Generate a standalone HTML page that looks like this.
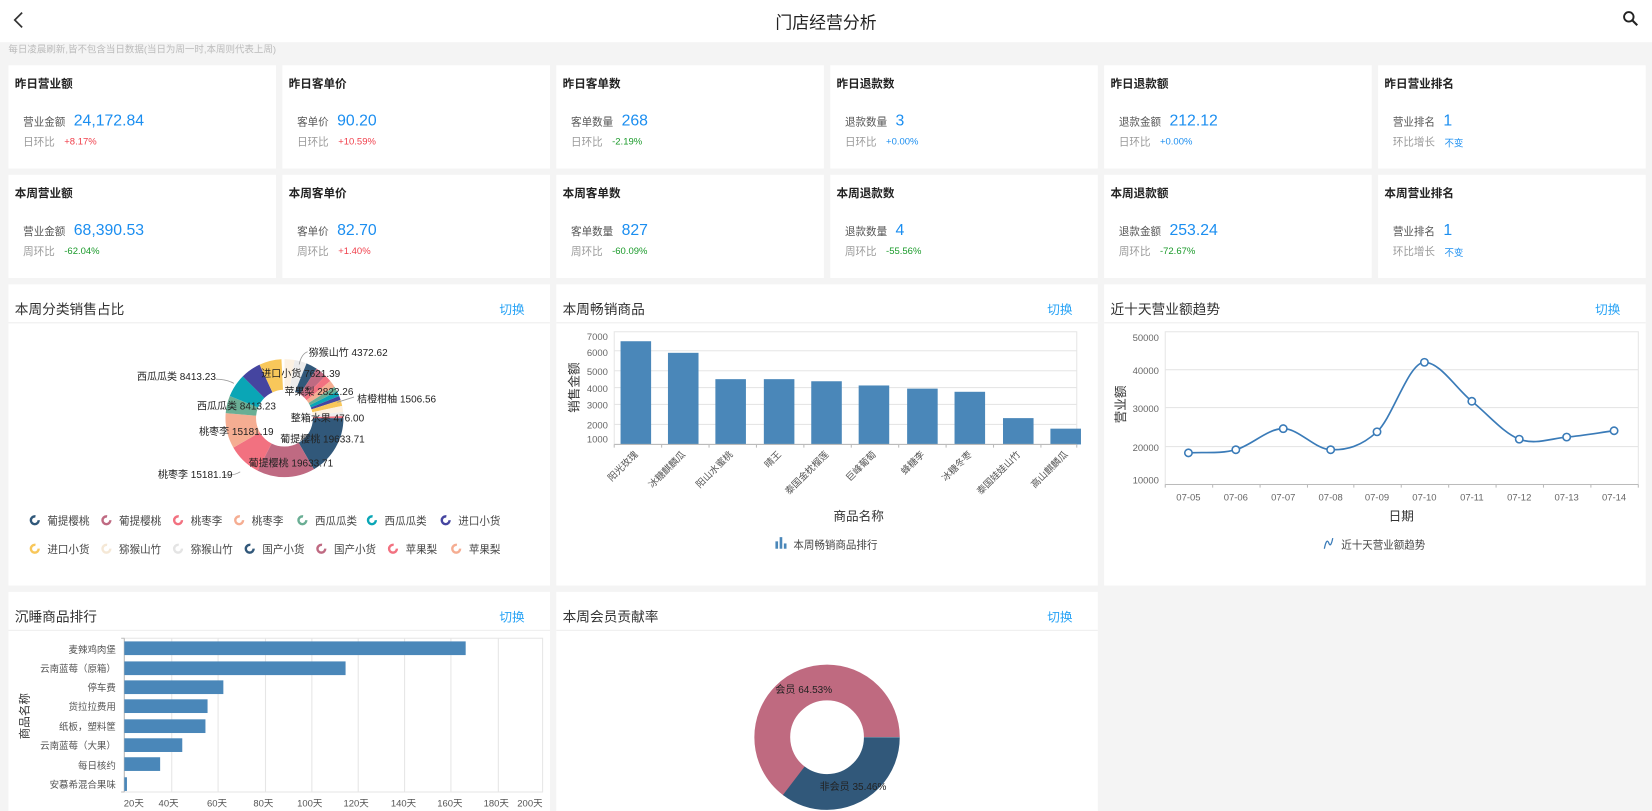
<!DOCTYPE html>
<html><head><meta charset="utf-8"><style>
*{margin:0;padding:0;box-sizing:border-box}
html,body{width:1652px;height:811px;overflow:hidden;background:#f4f4f4}
body{font-family:"Liberation Sans","Noto Sans CJK SC",sans-serif;color:#333}
#w{position:absolute;left:0;top:0;width:1568px;height:770px;transform:scale(1.05357,1.0532);transform-origin:0 0;background:#f4f4f4}
.a{position:absolute}
.hdr{left:0;top:0;width:1568px;height:40px;background:#fff}
.note{left:8px;top:41px;font-size:9px;color:#bbb;line-height:12px}
.card{position:absolute;background:#fff;width:254px;height:98px}
.card .t{position:absolute;left:6px;top:9px;font-size:11px;font-weight:bold;color:#222}
.card .r1{position:absolute;left:14px;top:44px;display:flex;align-items:baseline;white-space:nowrap}
.card .r1 span{font-size:10px;color:#555;margin-right:8px}
.card .r1 b{font-weight:normal;font-size:15px;color:#1b8ef0}
.card .r2{position:absolute;left:14px;top:64px;font-size:10px;color:#999;white-space:nowrap}
.card .r2 i{font-style:normal;position:absolute;left:39px;top:3px;font-size:9px}
.red{color:#f0404c}.grn{color:#1a9a2a}.blu{color:#1b8ef0}
.pan{position:absolute;background:#fff}
.pan .pt{position:absolute;left:6px;top:13px;font-size:13px;color:#333}
.pan .sw{position:absolute;right:24px;top:15px;font-size:12px;color:#29a3f5}
.pan .ln{position:absolute;left:0;right:0;top:36px;height:1px;background:#eee}
svg text{font-family:"Liberation Sans","Noto Sans CJK SC",sans-serif}
</style></head><body><div id="w">
<div class="a hdr"></div>
<svg class="a" style="left:0;top:0" width="1568" height="40"><path d="M21 12 L14 19 L21 26" fill="none" stroke="#333" stroke-width="1.6"/><circle cx="1546" cy="16" r="4.5" fill="none" stroke="#222" stroke-width="1.8"/><path d="M1549.5 19.5 L1554 24" stroke="#222" stroke-width="2"/></svg>
<div class="a" style="left:0;width:1568px;top:8px;text-align:center;font-size:16px;color:#222">门店经营分析</div>
<div class="a note">每日凌晨刷新,皆不包含当日数据(当日为周一时,本周则代表上周)</div>

<div class="card" style="left:8px;top:62px"><div class="t">昨日营业额</div><div class="r1"><span>营业金额</span><b>24,172.84</b></div><div class="r2">日环比<i class="red">+8.17%</i></div></div>
<div class="card" style="left:268px;top:62px"><div class="t">昨日客单价</div><div class="r1"><span>客单价</span><b>90.20</b></div><div class="r2">日环比<i class="red">+10.59%</i></div></div>
<div class="card" style="left:528px;top:62px"><div class="t">昨日客单数</div><div class="r1"><span>客单数量</span><b>268</b></div><div class="r2">日环比<i class="grn">-2.19%</i></div></div>
<div class="card" style="left:788px;top:62px"><div class="t">昨日退款数</div><div class="r1"><span>退款数量</span><b>3</b></div><div class="r2">日环比<i class="blu">+0.00%</i></div></div>
<div class="card" style="left:1048px;top:62px"><div class="t">昨日退款额</div><div class="r1"><span>退款金额</span><b>212.12</b></div><div class="r2">日环比<i class="blu">+0.00%</i></div></div>
<div class="card" style="left:1308px;top:62px"><div class="t">昨日营业排名</div><div class="r1"><span>营业排名</span><b>1</b></div><div class="r2">环比增长<i class="blu" style="left:49px">不变</i></div></div>

<div class="card" style="left:8px;top:166px"><div class="t">本周营业额</div><div class="r1"><span>营业金额</span><b>68,390.53</b></div><div class="r2">周环比<i class="grn">-62.04%</i></div></div>
<div class="card" style="left:268px;top:166px"><div class="t">本周客单价</div><div class="r1"><span>客单价</span><b>82.70</b></div><div class="r2">周环比<i class="red">+1.40%</i></div></div>
<div class="card" style="left:528px;top:166px"><div class="t">本周客单数</div><div class="r1"><span>客单数量</span><b>827</b></div><div class="r2">周环比<i class="grn">-60.09%</i></div></div>
<div class="card" style="left:788px;top:166px"><div class="t">本周退款数</div><div class="r1"><span>退款数量</span><b>4</b></div><div class="r2">周环比<i class="grn">-55.56%</i></div></div>
<div class="card" style="left:1048px;top:166px"><div class="t">本周退款额</div><div class="r1"><span>退款金额</span><b>253.24</b></div><div class="r2">周环比<i class="grn">-72.67%</i></div></div>
<div class="card" style="left:1308px;top:166px"><div class="t">本周营业排名</div><div class="r1"><span>营业排名</span><b>1</b></div><div class="r2">环比增长<i class="blu" style="left:49px">不变</i></div></div>

<div class="pan" style="left:8px;top:270px;width:514px;height:286px"><div class="pt">本周分类销售占比</div><div class="sw">切换</div><div class="ln"></div></div>
<div class="pan" style="left:528px;top:270px;width:514px;height:286px"><div class="pt">本周畅销商品</div><div class="sw">切换</div><div class="ln"></div></div>
<div class="pan" style="left:1048px;top:270px;width:514px;height:286px"><div class="pt">近十天营业额趋势</div><div class="sw">切换</div><div class="ln"></div></div>
<div class="pan" style="left:8px;top:562px;width:514px;height:208px"><div class="pt">沉睡商品排行</div><div class="sw">切换</div><div class="ln"></div></div>
<div class="pan" style="left:528px;top:562px;width:514px;height:208px"><div class="pt">本周会员贡献率</div><div class="sw">切换</div><div class="ln"></div></div>

<svg class="a" style="left:0;top:0" width="1568" height="770">
<g transform="translate(270,397) rotate(-90)" fill="none" stroke-width="29">
<circle r="41.5" pathLength="360" stroke="#31587a" stroke-dasharray="60 400" stroke-dashoffset="-90"/>
<circle r="41.5" pathLength="360" stroke="#bf6a82" stroke-dasharray="57 400" stroke-dashoffset="-150"/>
<circle r="41.5" pathLength="360" stroke="#f27180" stroke-dasharray="33 400" stroke-dashoffset="-207"/>
<circle r="41.5" pathLength="360" stroke="#f5ad92" stroke-dasharray="35 400" stroke-dashoffset="-240"/>
<circle r="41.5" pathLength="360" stroke="#6aae94" stroke-dasharray="17 400" stroke-dashoffset="-275"/>
<circle r="41.5" pathLength="360" stroke="#0aa6b6" stroke-dasharray="23 400" stroke-dashoffset="-292"/>
<circle r="41.5" pathLength="360" stroke="#4545a0" stroke-dasharray="20 400" stroke-dashoffset="-315"/>
<circle r="41.5" pathLength="360" stroke="#f8c75a" stroke-dasharray="22 400" stroke-dashoffset="-335"/>
<circle r="41.5" pathLength="360" stroke="#fcf1e2" stroke-dasharray="13 400" stroke-dashoffset="3"/>
<circle r="41.5" pathLength="360" stroke="#ececec" stroke-dasharray="12 400" stroke-dashoffset="-10"/>
<circle r="41.5" pathLength="360" stroke="#31587a" stroke-dasharray="11 400" stroke-dashoffset="-22"/>
<circle r="41.5" pathLength="360" stroke="#bf6a82" stroke-dasharray="11 400" stroke-dashoffset="-33"/>
<circle r="41.5" pathLength="360" stroke="#f27180" stroke-dasharray="7 400" stroke-dashoffset="-44"/>
<circle r="41.5" pathLength="360" stroke="#f5ad92" stroke-dasharray="7 400" stroke-dashoffset="-51"/>
<circle r="41.5" pathLength="360" stroke="#6aae94" stroke-dasharray="5 400" stroke-dashoffset="-58"/>
<circle r="41.5" pathLength="360" stroke="#0aa6b6" stroke-dasharray="5 400" stroke-dashoffset="-63"/>
<circle r="41.5" pathLength="360" stroke="#4545a0" stroke-dasharray="4 400" stroke-dashoffset="-68"/>
<circle r="41.5" pathLength="360" stroke="#f8c75a" stroke-dasharray="6 400" stroke-dashoffset="-72"/>
<circle r="41.5" pathLength="360" stroke="#fcf1e2" stroke-dasharray="6 400" stroke-dashoffset="-78"/>
<circle r="41.5" pathLength="360" stroke="#ececec" stroke-dasharray="4 400" stroke-dashoffset="-84"/>
<circle r="41.5" pathLength="360" stroke="#f27180" stroke-dasharray="2 400" stroke-dashoffset="-88"/>
</g>
<g font-size="9.5" fill="#222">
<path d="M284 346 Q286 336 292 334 M205 360 Q215 360 222 364 M320 382 L336 377 M228 448 Q222 452 212 451" stroke="#999" fill="none" stroke-width="0.8"/>
<text x="293" y="338">猕猴山竹 4372.62</text>
<text x="130" y="361">西瓜瓜类 8413.23</text>
<text x="248" y="358">进口小货 7621.39</text>
<text x="270" y="375">苹果梨 2822.26</text>
<text x="339" y="382">桔橙柑柚 1506.56</text>
<text x="187" y="389">西瓜瓜类 8413.23</text>
<text x="276" y="400">整箱水果 476.00</text>
<text x="189" y="413">桃枣李 15181.19</text>
<text x="266" y="420">葡提樱桃 19633.71</text>
<text x="236" y="443">葡提樱桃 19633.71</text>
<text x="150" y="454">桃枣李 15181.19</text>
</g>
<g font-size="10" fill="#444" stroke-width="2.3">
<g fill="none" stroke-dasharray="18 5">
<circle cx="33" cy="494" r="3.7" stroke="#31587a"/><circle cx="101" cy="494" r="3.7" stroke="#bf6a82"/><circle cx="169" cy="494" r="3.7" stroke="#f27180"/><circle cx="227" cy="494" r="3.7" stroke="#f5ad92"/><circle cx="287" cy="494" r="3.7" stroke="#6aae94"/><circle cx="353" cy="494" r="3.7" stroke="#0aa6b6"/><circle cx="423" cy="494" r="3.7" stroke="#4545a0"/>
<circle cx="33" cy="521" r="3.7" stroke="#f8c75a"/><circle cx="101" cy="521" r="3.7" stroke="#f5e8d6"/><circle cx="169" cy="521" r="3.7" stroke="#e4e4e4"/><circle cx="237" cy="521" r="3.7" stroke="#31587a"/><circle cx="305" cy="521" r="3.7" stroke="#bf6a82"/><circle cx="373" cy="521" r="3.7" stroke="#f27180"/><circle cx="433" cy="521" r="3.7" stroke="#f5ad92"/>
</g>
<text x="45" y="498">葡提樱桃</text><text x="113" y="498">葡提樱桃</text><text x="181" y="498">桃枣李</text><text x="239" y="498">桃枣李</text><text x="299" y="498">西瓜瓜类</text><text x="365" y="498">西瓜瓜类</text><text x="435" y="498">进口小货</text>
<text x="45" y="525">进口小货</text><text x="113" y="525">猕猴山竹</text><text x="181" y="525">猕猴山竹</text><text x="249" y="525">国产小货</text><text x="317" y="525">国产小货</text><text x="385" y="525">苹果梨</text><text x="445" y="525">苹果梨</text>
</g>

<g stroke="#e6e6e6" stroke-width="1">
<rect x="583" y="315" width="439" height="107" fill="none"/>
<path d="M583 333H1022M583 352H1022M583 368H1022M583 384H1022M583 403H1022"/>
</g>
<g fill="#4a87b9">
<rect x="589" y="324" width="29" height="98"/><rect x="634" y="335" width="29" height="87"/><rect x="679" y="360" width="29" height="62"/><rect x="725" y="360" width="29" height="62"/><rect x="770" y="362" width="29" height="60"/><rect x="815" y="366" width="29" height="56"/><rect x="861" y="369" width="29" height="53"/><rect x="906" y="372" width="29" height="50"/><rect x="952" y="397" width="29" height="25"/><rect x="997" y="407" width="29" height="15"/>
</g>
<path d="M583 422H1022M583 422v3M628 422v3M673 422v3M718 422v3M763 422v3M808 422v3M853 422v3M898 422v3M943 422v3M988 422v3M1022 422v3" stroke="#bbb"/>
<g font-size="9" fill="#666" text-anchor="end">
<text x="577" y="323">7000</text><text x="577" y="338">6000</text><text x="577" y="356">5000</text><text x="577" y="372">4000</text><text x="577" y="388">3000</text><text x="577" y="407">2000</text><text x="577" y="420">1000</text>
</g>
<g font-size="9" fill="#555" text-anchor="end">
<text transform="translate(606,432) rotate(-45)">阳光玫瑰</text>
<text transform="translate(651,432) rotate(-45)">冰糖麒麟瓜</text>
<text transform="translate(696,432) rotate(-45)">阳山水蜜桃</text>
<text transform="translate(742,432) rotate(-45)">晴王</text>
<text transform="translate(787,432) rotate(-45)">泰国金枕榴莲</text>
<text transform="translate(832,432) rotate(-45)">巨峰葡萄</text>
<text transform="translate(878,432) rotate(-45)">蜂糖李</text>
<text transform="translate(923,432) rotate(-45)">冰糖冬枣</text>
<text transform="translate(969,432) rotate(-45)">泰国娃娃山竹</text>
<text transform="translate(1014,432) rotate(-45)">高山麒麟瓜</text>
</g>
<text transform="translate(549,368) rotate(-90)" font-size="12" fill="#333" text-anchor="middle">销售金额</text>
<text x="815" y="494" font-size="12" fill="#333" text-anchor="middle">商品名称</text>
<g fill="#4a87b9"><rect x="736" y="514" width="2.5" height="7"/><rect x="740" y="510" width="2.5" height="11"/><rect x="744" y="516" width="2.5" height="5"/></g>
<text x="753" y="521" font-size="10" fill="#444">本周畅销商品排行</text>

<g stroke="#e6e6e6" fill="none">
<rect x="1106" y="315" width="449" height="145"/>
<path d="M1106 351H1555M1106 387H1555M1106 424H1555"/>
</g>
<path d="M1106 460H1555M1106 460v3M1151 460v3M1196 460v3M1241 460v3M1285 460v3M1330 460v3M1375 460v3M1420 460v3M1465 460v3M1510 460v3M1555 460v3" stroke="#bbb" fill="none"/>
<g font-size="9" fill="#666" text-anchor="end">
<text x="1100" y="324">50000</text><text x="1100" y="355">40000</text><text x="1100" y="391">30000</text><text x="1100" y="428">20000</text><text x="1100" y="459">10000</text>
</g>
<g font-size="9" fill="#666" text-anchor="middle">
<text x="1128" y="475">07-05</text><text x="1173" y="475">07-06</text><text x="1218" y="475">07-07</text><text x="1263" y="475">07-08</text><text x="1307" y="475">07-09</text><text x="1352" y="475">07-10</text><text x="1397" y="475">07-11</text><text x="1442" y="475">07-12</text><text x="1487" y="475">07-13</text><text x="1532" y="475">07-14</text>
</g>
<path d="M1128,430 C1143,429 1158,431.2 1173,427 C1188,422.8 1203,407 1218,407 C1233,407 1248,426.5 1263,427 C1278,427.5 1292,423.8 1307,410 C1322,396.2 1337,344 1352,344 C1367,344 1382,368.9 1397,381 C1412,393 1427,411.3 1442,417 C1457,422.7 1472,416.3 1487,415 C1502,413.7 1517,411 1532,409" fill="none" stroke="#3a7bb8" stroke-width="1.6"/>
<g fill="#fff" stroke="#3a7bb8" stroke-width="1.5">
<circle cx="1128" cy="430" r="3.5"/><circle cx="1173" cy="427" r="3.5"/><circle cx="1218" cy="407" r="3.5"/><circle cx="1263" cy="427" r="3.5"/><circle cx="1307" cy="410" r="3.5"/><circle cx="1352" cy="344" r="3.5"/><circle cx="1397" cy="381" r="3.5"/><circle cx="1442" cy="417" r="3.5"/><circle cx="1487" cy="415" r="3.5"/><circle cx="1532" cy="409" r="3.5"/>
</g>
<text transform="translate(1068,384) rotate(-90)" font-size="12" fill="#333" text-anchor="middle">营业额</text>
<text x="1330" y="494" font-size="12" fill="#333" text-anchor="middle">日期</text>
<path d="M1257 521 Q1259 511 1261 515 Q1263 521 1265 511" fill="none" stroke="#3a7bb8" stroke-width="1.2"/>
<text x="1273" y="521" font-size="10" fill="#444">近十天营业额趋势</text>

<g stroke="#e6e6e6" fill="none">
<rect x="118" y="606" width="397" height="146"/>
<path d="M163 606V752M207 606V752M252 606V752M296 606V752M340 606V752M384 606V752M428 606V752M473 606V752"/>
</g>
<path d="M118 606V752M115 606h3M115 752h3" stroke="#bbb"/>
<g fill="#4a87b9">
<rect x="118" y="609" width="324" height="13"/><rect x="118" y="628" width="210" height="13"/><rect x="118" y="646" width="94" height="13"/><rect x="118" y="664" width="79" height="13"/><rect x="118" y="683" width="77" height="13"/><rect x="118" y="701" width="55" height="13"/><rect x="118" y="719" width="34" height="13"/><rect x="118" y="738" width="2.5" height="13"/>
</g>
<g font-size="9" fill="#555" text-anchor="end">
<text x="110" y="620">麦辣鸡肉堡</text><text x="110" y="638">云南蓝莓（原箱）</text><text x="110" y="656">停车费</text><text x="110" y="674">货拉拉费用</text><text x="110" y="693">纸板，塑料筐</text><text x="110" y="711">云南蓝莓（大果）</text><text x="110" y="730">每日核约</text><text x="110" y="748">安慕希混合果味</text>
</g>
<g font-size="9" fill="#555" text-anchor="middle">
<text x="127" y="766">20天</text><text x="160" y="766">40天</text><text x="206" y="766">60天</text><text x="250" y="766">80天</text><text x="294" y="766">100天</text><text x="338" y="766">120天</text><text x="383" y="766">140天</text><text x="427" y="766">160天</text><text x="471" y="766">180天</text><text x="503" y="766">200天</text>
</g>
<text transform="translate(27,680) rotate(-90)" font-size="11" fill="#333" text-anchor="middle">商品名称</text>

<g transform="translate(785,700)" fill="none" stroke-width="34">
<circle r="52" pathLength="360" stroke="#bf6a80" stroke-dasharray="233 400" stroke-dashoffset="-127" />
<circle r="52" pathLength="360" stroke="#31587a" stroke-dasharray="127.5 400" stroke-dashoffset="0"/>
</g>
<text x="736" y="658" font-size="9.5" fill="#222">会员 64.53%</text>
<text x="778" y="750" font-size="9.5" fill="#222">非会员 35.46%</text>
</svg>
</div></body></html>
